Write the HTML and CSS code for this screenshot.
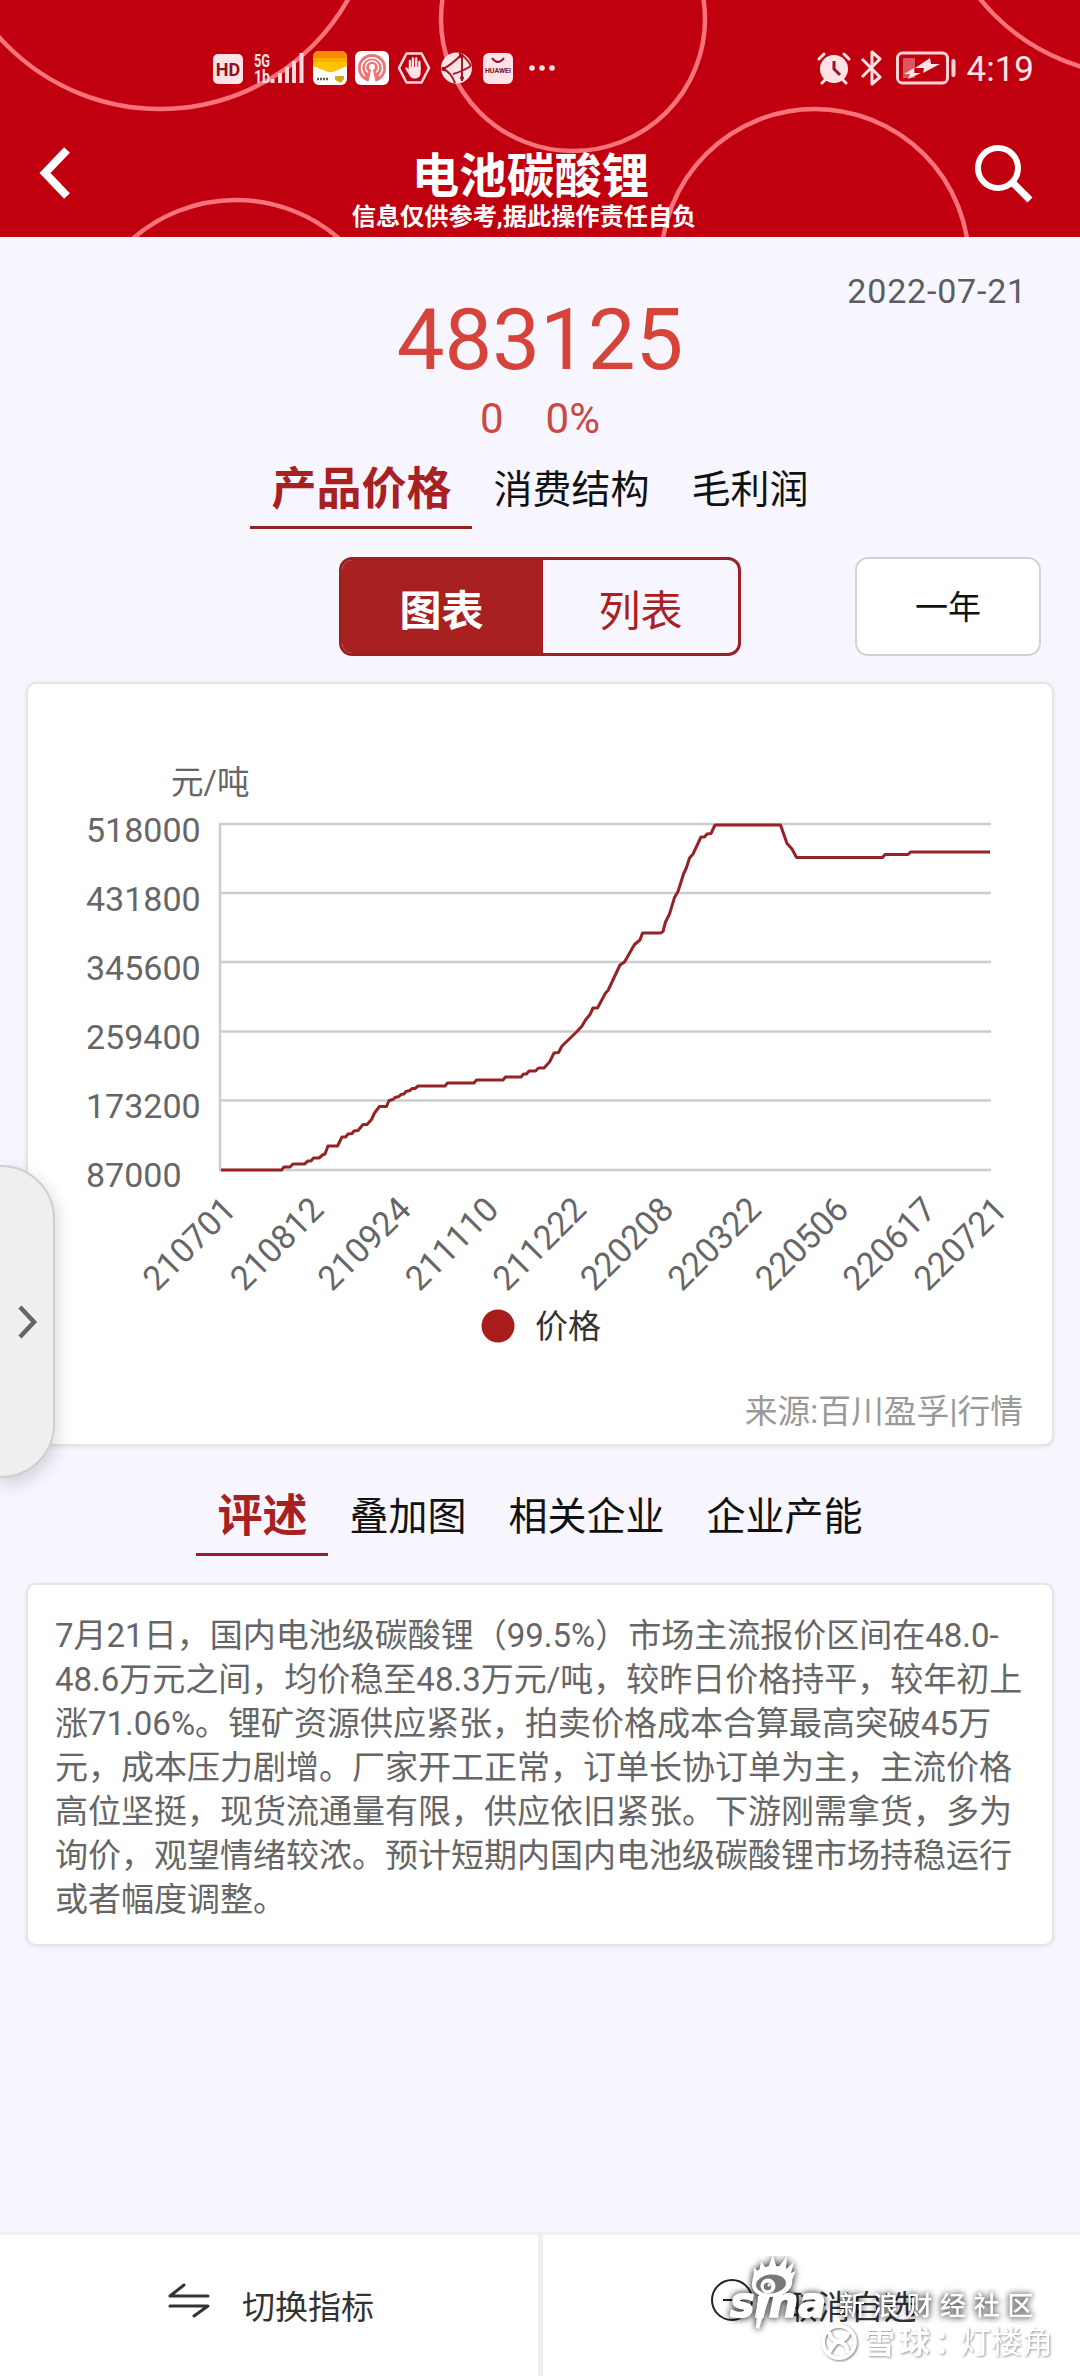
FILE: index.html
```html
<!DOCTYPE html>
<html lang="zh-CN">
<head>
<meta charset="utf-8">
<title>电池碳酸锂</title>
<link rel="stylesheet" href="styles.css">
</head>
<body>
<header class="header">
    <svg class="header-circles" width="1080" height="237" viewBox="0 0 1080 237">
        <circle cx="160" cy="-107" r="216"/>
        <circle cx="573" cy="19" r="132"/>
        <circle cx="815" cy="263" r="154"/>
        <circle cx="236" cy="357" r="157"/>
        <circle cx="1139" cy="-129" r="204"/>
    </svg>

    <div class="status-bar">
        <div class="status-left">
            <svg width="31" height="34" viewBox="0 0 31 34">
                <rect x="0" y="3" width="30" height="30" rx="5" fill="#ffe3e6"/>
                <text x="15" y="25" class="hd">HD</text>
            </svg>
            <svg width="53" height="34" viewBox="0 0 53 34">
                <text x="2" y="15.500" class="net" textLength="16" lengthAdjust="spacingAndGlyphs">5G</text>
                <text x="2" y="32" class="net" textLength="16" lengthAdjust="spacingAndGlyphs">1b</text>
                <path d="M20.500 32v-4M28 32v-10M35 32v-16M42 32v-22M49.500 32V2" stroke="#ffd9dc" stroke-width="4"/>
            </svg>
            <svg width="34" height="34" viewBox="0 0 34 34">
                <rect width="34" height="34" rx="6" fill="#fff"/>
                <path d="M0 15V6a6 6 0 0 1 6-6h22a6 6 0 0 1 6 6v9L20 21h-5z" fill="#ffc400"/>
                <path d="M0 7V6a6 6 0 0 1 6-6h22a6 6 0 0 1 6 6v1z" fill="#f98a08"/>
                <path d="M0 7h34v4H0z" fill="#fdab05"/>
                <path d="M4 28h11" stroke="#6a5a4a" stroke-width="2.500" stroke-dasharray="2 1"/>
                <path d="M22 25h9v3l-3 4-6-3z" fill="#d9a520"/>
            </svg>
            <svg width="34" height="34" viewBox="0 0 34 34">
                <rect width="34" height="34" rx="6" fill="#fff"/>
                <circle cx="17" cy="17" r="14" fill="#ee7477"/>
                <g fill="none" stroke="#fff" stroke-width="1.500">
                    <path d="M10 25a10.500 10.500 0 1 1 14 0"/>
                    <path d="M13 21.500a6.500 6.500 0 1 1 8 0"/>
                </g>
                <circle cx="17" cy="16" r="3" fill="#fff"/>
                <path d="M17 15l4 18h-8z" fill="#fff"/>
            </svg>
            <svg width="34" height="34" viewBox="0 0 34 34">
                <path d="M9.500 2.500h15L32 17l-7.500 14.500h-15L2 17z" fill="none" stroke="#ffd9dc" stroke-width="2.600" stroke-linejoin="round"/>
                <path d="M13 18v-8M16 18V7.500M19.200 18V7.500M22.400 18v-7M9.500 17.500l4 6" stroke="#ffe3e6" stroke-width="2.400" stroke-linecap="round"/>
                <path d="M11.800 16h11.800v6c0 4-3 5.500-6 5.500s-5-2-6-5z" fill="#ffe3e6"/>
            </svg>
            <svg width="34" height="34" viewBox="0 0 34 34">
                <circle cx="17.500" cy="17" r="15.500" fill="#ffe3e6"/>
                <path d="M4 18Q12 14 21 5M23 7v23M4 18q8 3 12 14M14 23q8-2 18-8M20 2q8 5 12 13" fill="none" stroke="#a91626" stroke-width="2"/>
                <circle cx="22" cy="5" r="2.200" fill="#8c1320"/>
                <circle cx="4.500" cy="18" r="2.200" fill="#8c1320"/>
                <circle cx="23" cy="27" r="2" fill="#8c1320"/>
            </svg>
            <svg width="34" height="34" viewBox="0 0 34 34">
                <rect x="2" y="2" width="30" height="31" rx="6" fill="#ffe3e6"/>
                <path d="M11 7q6 8 12 0" fill="none" stroke="#8c1320" stroke-width="2"/>
                <text x="17" y="22" class="huawei">HUAWEI</text>
            </svg>
            <svg width="34" height="34" viewBox="0 0 34 34">
                <circle cx="9" cy="17" r="2.800" fill="#ffe3e6"/>
                <circle cx="19" cy="17" r="2.800" fill="#ffe3e6"/>
                <circle cx="29" cy="17" r="2.800" fill="#ffe3e6"/>
            </svg>
        </div>
        <div class="status-right">
            <svg width="34" height="34" viewBox="0 0 34 34">
                <circle cx="17" cy="18" r="14" fill="#ffe3e6"/>
                <path d="M2 8l5-5M32 8l-5-5M5 32l4-4M29 32l-4-4" stroke="#ffe3e6" stroke-width="3" stroke-linecap="round"/>
                <path d="M17 10v8l6 6" fill="none" stroke="#a3101d" stroke-width="3"/>
            </svg>
            <svg width="24" height="36" viewBox="0 0 24 36">
                <path d="M2 9l18 18-8 7V2l8 7L2 27" fill="none" stroke="#ffe3e6" stroke-width="3" stroke-linejoin="round"/>
            </svg>
            <svg class="battery" width="60" height="34" viewBox="0 0 60 34">
                <rect x="1.500" y="2" width="50" height="30" rx="5" fill="none" stroke="#ffd0d4" stroke-width="3"/>
                <rect x="7" y="7" width="12" height="20" fill="#dd5561"/>
                <path d="M34 7L19 17h9l-1 5 17-9h-9z" fill="#ffe3e6"/>
                <path d="M18 17L8 23h6l-2 5 13-6h-7z" fill="#ffe3e6"/>
                <path d="M57.500 10v14" stroke="#ffd0d4" stroke-width="4" stroke-linecap="round"/>
            </svg>
            <span class="clock">4:19</span>
        </div>
    </div>

    <div class="title-bar">
        <svg class="back" width="36" height="54" viewBox="0 0 36 54">
            <path d="M30 4L8 27l22 23" fill="none" stroke="#fff" stroke-width="8"/>
        </svg>
        <div class="titles">
            <h1>电池碳酸锂</h1>
            <p>信息仅供参考,据此操作责任自负</p>
        </div>
        <svg class="search" width="60" height="60" viewBox="0 0 60 60">
            <circle cx="24" cy="24" r="20" fill="none" stroke="#fff" stroke-width="6"/>
            <path d="M38 38l18 18" stroke="#fff" stroke-width="7"/>
        </svg>
    </div>
</header>

<main>
    <section class="quote">
        <span class="date">2022-07-21</span>
        <div class="price">483125</div>
        <div class="change"><span>0</span><span>0%</span></div>
    </section>

    <nav class="tabs">
        <a class="active">产品价格</a>
        <a>消费结构</a>
        <a>毛利润</a>
    </nav>

    <div class="filters">
        <div class="segment">
            <button class="selected">图表</button>
            <button>列表</button>
        </div>
        <button class="period">一年</button>
    </div>

    <section class="card chart-card">
        <svg class="chart" width="1024" height="760" viewBox="28 684 1024 760">
            <g class="grid">
                <path d="M219 824H991M220 893H991M220 962H991M220 1031.500H991M220 1100.500H991M219 1170H991M220 824V1170"/>
            </g>
            <g class="axis">
                <text x="171" y="794" class="unit">元/吨</text>
                <text x="86" y="842">518000</text>
                <text x="86" y="911">431800</text>
                <text x="86" y="980">345600</text>
                <text x="86" y="1049">259400</text>
                <text x="86" y="1118">173200</text>
                <text x="86" y="1187">87000</text>
            </g>
            <g class="axis">
                <text transform="translate(157 1292.500) rotate(-45)">210701</text>
                <text transform="translate(244.500 1292.500) rotate(-45)">210812</text>
                <text transform="translate(332 1292.500) rotate(-45)">210924</text>
                <text transform="translate(419.500 1292.500) rotate(-45)">211110</text>
                <text transform="translate(507 1292.500) rotate(-45)">211222</text>
                <text transform="translate(594.500 1292.500) rotate(-45)">220208</text>
                <text transform="translate(682 1292.500) rotate(-45)">220322</text>
                <text transform="translate(769.500 1292.500) rotate(-45)">220506</text>
                <text transform="translate(857 1292.500) rotate(-45)">220617</text>
                <text transform="translate(928 1292.500) rotate(-45)">220721</text>
            </g>
            <polyline class="line" points="221,1170 281.500,1170 284,1167 290,1167 293,1164 304.500,1164 308,1161 311,1161 313.500,1158 319,1158 322.500,1155 325,1154 328,1146 337.500,1146 342,1137 345.500,1137 348,1134 352,1133.500 354,1131 358,1130.500 363,1124.500 367,1124.500 371.500,1119.500 374.500,1113 379.500,1106.500 386.500,1106.500 389,1100.500 393,1099.500 395,1097.500 399,1096.500 401,1094.500 404,1094 406,1091.500 410,1090.500 412,1088.500 415,1088.500 418,1086 445,1086 447.500,1083 474,1083 476.500,1080 503,1080 505.500,1077 521,1077 523.500,1074 526.500,1074 529,1071 535.500,1071 538.500,1068 544,1068 549.500,1062 554,1053 558.500,1052.500 562,1046 577,1031.500 582,1026 585.500,1020 590,1014.500 593,1008 597.500,1008 605.500,993 608,990.500 620,965 624.500,962 634.500,944.500 640,940 642.500,933 660.500,933 663,931.500 665.500,922 669.500,914 674.500,897.500 678,891.500 683.500,874 686.500,867.500 689.500,858 693,854 701,837 704.500,837 707,834 711,833.500 715,825 780.500,825 787,843.500 792,849 796.500,857.500 882.500,857.500 885,854.500 908,854.500 910.500,852 990,852"/>
            <circle cx="498" cy="1326" r="16.500" fill="#a91c1c"/>
            <text x="535" y="1338" class="legend">价格</text>
            <text x="1023" y="1423" class="source">来源:百川盈孚|行情</text>
        </svg>
    </section>

    <nav class="tabs tabs-second">
        <a class="active">评述</a>
        <a>叠加图</a>
        <a>相关企业</a>
        <a>企业产能</a>
    </nav>

    <section class="card comment">
        7月21日，国内电池级碳酸锂（99.5%）市场主流报价区间在48.0-<br>
        48.6万元之间，均价稳至48.3万元/吨，较昨日价格持平，较年初上<br>
        涨71.06%。锂矿资源供应紧张，拍卖价格成本合算最高突破45万<br>
        元，成本压力剧增。厂家开工正常，订单长协订单为主，主流价格<br>
        高位坚挺，现货流通量有限，供应依旧紧张。下游刚需拿货，多为<br>
        询价，观望情绪较浓。预计短期内国内电池级碳酸锂市场持稳运行<br>
        或者幅度调整。
    </section>
</main>

<aside class="drawer">
    <svg width="22" height="34" viewBox="0 0 22 34">
        <path d="M3 2l14 15L3 32" fill="none" stroke="#666" stroke-width="4.500"/>
    </svg>
</aside>

<footer class="footer">
    <div class="action">
        <svg width="42" height="36" viewBox="0 0 42 36">
            <path d="M16 2L2 13h38M2 23h38L26 33" fill="none" stroke="#333" stroke-width="3" stroke-linejoin="round" stroke-linecap="round"/>
        </svg>
        <span>切换指标</span>
    </div>
    <div class="action cancel">
        <svg width="42" height="42" viewBox="0 0 42 42">
            <circle cx="21" cy="21" r="20" fill="none" stroke="#222" stroke-width="2"/>
            <path d="M12 21h19" stroke="#222" stroke-width="2"/>
        </svg>
        <span>取消自选</span>
    </div>

    <div class="watermark">
        <svg width="370" height="120" viewBox="0 0 370 120">
            <g class="sina">
                <path d="M42 27C43 15 50 10 64 10s20 8 18 18c-2 9-12 13-22 13S41 37 42 27z"/>
                <path d="M43 26l1-15 5 6 2-12 6 9 6-15 4 14 10-13-1 13 8-7-3 11 5-2-4 9z"/>
                <text x="20" y="60.500" class="sina-text" textLength="96" lengthAdjust="spacingAndGlyphs">sına</text>
                <path d="M48 40h12L49 73l-3-1z"/>
            </g>
            <ellipse cx="61" cy="28" rx="15" ry="9.500" fill="#777" transform="rotate(-6 61 28)"/>
            <circle cx="58" cy="30" r="7.500" fill="#fff"/>
            <circle cx="57.500" cy="30.500" r="3.800" fill="#777"/>
            <circle cx="59" cy="29" r="1.500" fill="#fff"/>
            <text x="129" y="59" class="sina-cn">新浪财经社区</text>
            <g class="snowball-logo">
                <circle cx="129" cy="86" r="16"/>
                <path d="M119 76q2 9 10 10t9 11M139 76q-3 8-9 9t-11 12"/>
            </g>
            <text x="154" y="97" class="snowball"><tspan class="snowball-name">雪球：</tspan><tspan x="250">灯楼角</tspan></text>
        </svg>
    </div>
</footer>
</body>
</html>
```
FILE: styles.css
```css
* {
    box-sizing: border-box;
}

body {
    position: relative;
    display: flex;
    flex-direction: column;
    width: 1080px;
    height: 2376px;
    margin: 0;
    background: #f7f6fe;
    font-family: Roboto, "Noto Sans CJK SC", sans-serif;
    overflow: hidden;
}

svg {
    display: block;
    flex: none;
}

button {
    padding: 0;
    border: 0;
    background: none;
    font-family: inherit;
}

/* header */
.header {
    position: relative;
    height: 237px;
    background: #c0000f;
    color: #fff;
}

.header-circles {
    position: absolute;
    left: 0;
    top: 0;
    fill: none;
    stroke: #f9737b;
    stroke-width: 4.5;
}

.status-bar {
    position: relative;
    display: flex;
    justify-content: space-between;
    height: 137px;
    padding: 51px 46px 0 213px;
}

.status-left {
    display: flex;
    gap: 8px;
}

.status-right {
    display: flex;
    height: 34px;
    align-items: center;
}

.status-right .battery {
    margin: 0 11px 0 12px;
}

.status-right svg:first-child {
    margin-right: 9px;
}

.clock {
    color: #ffe3e6;
    font-size: 35px;
    line-height: 34px;
    padding-top: 4px;
}

.hd {
    fill: #8c1320;
    font-size: 18px;
    font-weight: 700;
    text-anchor: middle;
}

.net {
    fill: #ffe3e6;
    font-size: 18px;
    font-weight: 700;
}

.huawei {
    fill: #7d1420;
    font-size: 7px;
    font-weight: 700;
    text-anchor: middle;
}

.title-bar {
    position: relative;
    display: flex;
    justify-content: space-between;
    align-items: flex-start;
    padding: 9px 46px 0 37px;
}

.back {
    margin-right: 9px;
}

.titles h1 {
    margin: 0;
    padding: 1px 0 0 52px;
    font-size: 47.500px;
    line-height: 60px;
    font-weight: 700;
}

.titles p {
    margin: -5px 0 0 -8px;
    font-size: 24.200px;
    line-height: 30px;
    font-weight: 700;
}

.search {
    margin-top: -2px;
}

/* quote */
.quote {
    position: relative;
    height: 208px;
    padding-top: 53px;
    text-align: center;
}

.date {
    position: absolute;
    right: 53px;
    top: 34px;
    color: #5c5c60;
    font-size: 34px;
    line-height: 40px;
    letter-spacing: 0.800px;
}

.price {
    color: #d6433a;
    font-size: 85px;
    line-height: 100px;
}

.change {
    display: flex;
    justify-content: center;
    gap: 42px;
    margin-top: 4px;
    color: #cb4741;
    font-size: 42px;
    line-height: 50px;
}

/* tabs */
.tabs {
    display: flex;
    justify-content: center;
    align-items: flex-end;
    height: 84px;
}

.tabs a {
    height: 84px;
    padding: 0 21px;
    color: #111;
    font-size: 39px;
    line-height: 91px;
}

.tabs .active {
    border-bottom: 3px solid #972024;
    color: #a82022;
    font-size: 45px;
    line-height: 89px;
    font-weight: 700;
}

.filters {
    display: flex;
    justify-content: flex-end;
    gap: 114px;
    height: 154px;
    padding: 28px 39px 0 0;
}

.segment {
    display: flex;
    width: 402px;
    height: 99px;
    border: 3px solid #9c2125;
    border-radius: 13px;
    overflow: hidden;
}

.segment button {
    flex: 1;
    padding-top: 2px;
    color: #a82022;
    font-size: 42px;
}

.segment .selected {
    flex: 0 0 201px;
    padding-right: 2px;
    background: #a92021;
    color: #fff;
    font-weight: 700;
}

.period {
    width: 186px;
    height: 99px;
    padding-bottom: 3px;
    border: 2px solid #d2d2d6;
    border-radius: 13px;
    background: #fff;
    color: #111;
    font-size: 33px;
}

/* cards */
.card {
    width: 1028px;
    margin-left: 26px;
    border: 2px solid #e3e3e8;
    border-radius: 10px;
    background: #fff;
    box-shadow: 0 1px 4px rgba(0, 0, 0, 0.08);
}

.chart-card {
    height: 764px;
    margin-top: -1px;
}

.grid {
    fill: none;
    stroke: #cdcdcd;
    stroke-width: 2.5;
}

.axis {
    fill: #666;
    font-size: 34px;
}

.unit {
    font-size: 32.500px;
}

.line {
    fill: none;
    stroke: #962226;
    stroke-width: 3;
    stroke-linejoin: round;
}

.legend {
    fill: #333;
    font-size: 33px;
}

.source {
    fill: #999;
    font-size: 32.800px;
    text-anchor: end;
}

.tabs-second {
    margin-top: 26px;
}

.comment {
    height: 363px;
    margin-top: 27px;
    padding: 29px 0 0 27px;
    color: #666;
    font-size: 33px;
    line-height: 44px;
    white-space: nowrap;
}

/* side drawer handle */
.drawer {
    position: absolute;
    left: -3px;
    top: 1165px;
    display: flex;
    align-items: center;
    width: 58px;
    height: 313px;
    padding-left: 18px;
    border: 2px solid #cfcfd2;
    border-radius: 0 54px 54px 0;
    background: #efeff0;
    box-shadow: 2px 6px 18px rgba(0, 0, 0, 0.16);
}

/* bottom bar */
.footer {
    position: relative;
    display: flex;
    height: 144px;
    margin-top: auto;
    border-top: 3px solid #eee;
    background: #fff;
}

.action {
    display: flex;
    flex: 1;
    align-items: flex-start;
    padding: 48px 0 0 168px;
    color: #333;
    font-size: 33px;
    line-height: 48px;
}

.action span {
    margin: 1px 0 0 32px;
}

.action:first-child {
    border-right: 5px solid #eee;
}

.cancel {
    padding: 44px 0 0 168px;
}

.cancel span {
    margin: 5px 0 0 32px;
}

.watermark {
    position: absolute;
    left: 710px;
    top: 21px;
}

.sina,
.sina-cn {
    fill: #fff;
    filter: drop-shadow(0 0 3px rgba(0, 0, 0, 0.7)) drop-shadow(0 1px 3px rgba(0, 0, 0, 0.35));
}

.sina-text {
    stroke: #fff;
    stroke-width: 1.5;
    font-family: "DejaVu Sans", sans-serif;
    font-size: 42px;
    font-weight: 700;
    font-style: italic;
}

.sina-cn {
    font-size: 26px;
    font-weight: 500;
    letter-spacing: 7.700px;
}

.snowball,
.snowball-logo {
    fill: #fff;
    filter: drop-shadow(1px 1px 1px rgba(0, 0, 0, 0.5));
}

.snowball {
    font-size: 31px;
    opacity: 0.8;
}

.snowball-name {
    font-weight: 700;
    letter-spacing: 4px;
}

.snowball-logo {
    fill: none;
    stroke: #fff;
    stroke-width: 4;
}
```
